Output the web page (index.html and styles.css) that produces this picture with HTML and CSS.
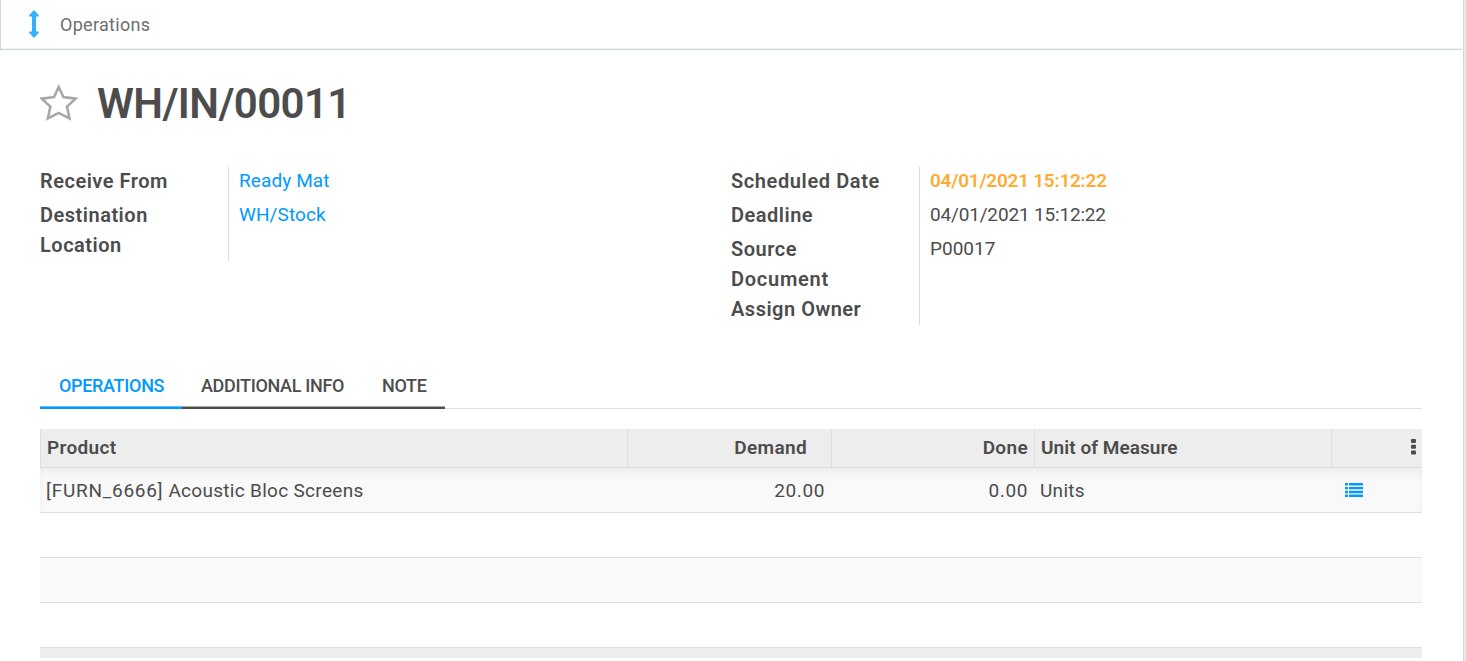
FILE: index.html
```html
<!DOCTYPE html>
<html lang="en">
<head>
<meta charset="utf-8">
<title>WH/IN/00011</title>
<link rel="stylesheet" href="styles.css">
</head>
<body>
<div class="sheet">
  <header class="stat-bar">
    <svg class="stat-icon" viewBox="0 0 12 30" width="12" height="30"><path d="M6 1 L11 6.4 Q11.3 7.6 10 7.6 H8.1 V22.4 H10 Q11.3 22.4 11 23.6 L6 29 L1 23.6 Q.7 22.4 2 22.4 H4 V7.6 H2 Q.7 7.6 1 6.4 Z"/></svg>
    <span class="stat-label">Operations</span>
  </header>
  <main class="content">
    <div class="title-row">
      <svg class="star" viewBox="0 0 38 37" width="38" height="37"><path d="M18.7 3 L23.4 13.1 L35.6 14.6 L27 22.6 L29.5 34.3 L18.7 28.9 L7.9 34.3 L10.4 22.6 L1.8 14.6 L14 13.1 Z"/></svg>
      <h1 class="title">WH/IN/00011</h1>
    </div>
    <div class="groups">
      <dl class="group">
        <dt>Receive From</dt><dd class="link">Ready Mat</dd>
        <dt>Destination<br>Location</dt><dd class="link">WH/Stock</dd>
      </dl>
      <dl class="group">
        <dt><span class="t-sched">Scheduled Date</span></dt><dd class="warn">04/01/2021 15:12:22</dd>
        <dt>Deadline</dt><dd class="date">04/01/2021 15:12:22</dd>
        <dt class="tight">Source<br><span class="t-document">Document</span></dt><dd>P00017</dd>
        <dt>Assign Owner</dt><dd></dd>
      </dl>
    </div>
    <nav class="tabs">
      <a class="tab active">OPERATIONS</a>
      <a class="tab tab-info">ADDITIONAL INFO</a>
      <a class="tab tab-note">NOTE</a>
    </nav>
    <div class="table">
      <div class="row head">
        <div class="cell">Product</div>
        <div class="cell num demand">Demand</div>
        <div class="cell num">Done</div>
        <div class="cell uom">Unit of Measure</div>
        <div class="cell more"><svg viewBox="0 0 5 16" width="5" height="16"><rect width="5" height="4" rx="1"/><rect y="5.7" width="5" height="4" rx="1"/><rect y="11.4" width="5" height="4" rx="1"/></svg></div>
      </div>
      <div class="row line shade">
        <div class="cell item"><span class="code">[FURN_6666]</span> Acoustic Bloc Screens</div>
        <div class="cell num">20.00</div>
        <div class="cell num">0.00</div>
        <div class="cell unit">Units</div>
        <div class="cell list"><svg viewBox="0 0 18 14" width="18" height="14"><path d="M0 0h3v2.4H0zM4 0h14v2.4H4zM0 3.9h3v2.4H0zM4 3.9h14v2.4H4zM0 7.8h3v2.4H0zM4 7.8h14v2.4H4zM0 11.6h3V14H0zM4 11.6h14V14H4z"/></svg></div>
      </div>
      <div class="row"></div>
      <div class="row shade"></div>
      <div class="row"></div>
      <div class="foot"></div>
    </div>
  </main>
</div>
</body>
</html>
```
FILE: styles.css
```css
* { box-sizing: border-box; }
body { margin: 0; height: 661px; overflow: hidden; background: #e4e9ee; color: #4c4c4c; font: 19px/30px Roboto, "Liberation Sans", sans-serif; }
.sheet { width: 1464px; height: 661px; background: #fff; border-right: 1px solid #ced4da; }
.stat-bar { display: flex; align-items: center; width: 1462px; height: 50px; padding-left: 27px; border-left: 1px solid #ced4da; border-bottom: 1px solid #ced4da; box-shadow: inset 0 -1px #f0f3f5; }
.stat-icon { margin-top: -1px; fill: #35b0fc; }
.stat-label { margin-left: 20px; color: #6e6e6e; font-size: 18px; letter-spacing: .3px; }
.content { width: 1422px; padding-left: 40px; }
.title-row { display: flex; height: 116px; padding-top: 34px; }
.star { fill: none; stroke: #a8a8a8; stroke-width: 2.6; }
.title { margin: 0 0 0 19px; font-size: 42px; line-height: 40px; font-weight: 600; letter-spacing: -.6px; }

.groups { display: grid; grid-template-columns: 691px 691px; align-items: start; }
.group { display: grid; grid-template-columns: 188px 1fr; margin: 0; }
dt { padding-bottom: 4px; font-size: 20px; font-weight: 600; letter-spacing: .5px; }
dt:last-of-type, dt.tight { padding-bottom: 0; }
dt:last-of-type { padding-bottom: 1px; }
dd { margin: 0; padding-left: 10px; border-left: 1px solid #dcdcdc; line-height: 29px; }
dd:first-of-type { margin-top: 1px; line-height: 27px; }
.t-sched { letter-spacing: .6px; }
.t-document { letter-spacing: .75px; }
.link { color: #0099ff; letter-spacing: .1px; }
.warn { color: #ffac33; font-weight: 600; letter-spacing: -.25px; }
.date { letter-spacing: -.17px; }

.tabs { display: flex; height: 44px; margin-top: 40px; box-shadow: inset 0 -1px #dee2e6; font-size: 18px; font-weight: 500; line-height: 41px; letter-spacing: -.32px; }
.tab { width: 142px; padding-left: 19px; border-bottom: 2px solid #4c4c4c; box-shadow: inset 0 -1px #aaa; }
.tab-info { width: 181px; }
.tab-note { width: 82px; }
.tab.active { color: #0099ff; border-color: #0099ff; box-shadow: inset 0 -1px #66c2ff; }

.table { margin-top: 20px; }
.row { display: grid; grid-template-columns: 587px 204px 203px 297px 91px; height: 45px; border-bottom: 1px solid #dee0e5; line-height: 46px; }
.shade { background: #f9f9f9; }
.cell { height: 44px; padding: 0 6px; white-space: nowrap; }
.num { text-align: right; }
.head { height: 39px; background: #ededed; border-color: #dedfe3; font-weight: 600; line-height: 37px; letter-spacing: .35px; }
.head .cell { height: 38px; border-left: 1px solid #dcdee0; }
.head .demand { padding-right: 24px; }
.head .uom { letter-spacing: .05px; }
.more { display: flex; justify-content: flex-end; }
.more svg { margin-top: 10px; fill: #4c4c4c; }
.line { box-shadow: inset 0 12px 10px -9px #e9e9e9, inset 4px 0 4px -3px #f0f0f0, inset -4px 0 4px -3px #f0f0f0; }
.line .item { letter-spacing: .3px; }
.code { letter-spacing: .72px; }
.line .num { letter-spacing: .6px; }
.line .list { padding: 15px 0 0 14px; line-height: 0; }
.line .unit { letter-spacing: .3px; }
.list svg { fill: #0099ff; }
.foot { height: 10px; background: #ededed; }
```
